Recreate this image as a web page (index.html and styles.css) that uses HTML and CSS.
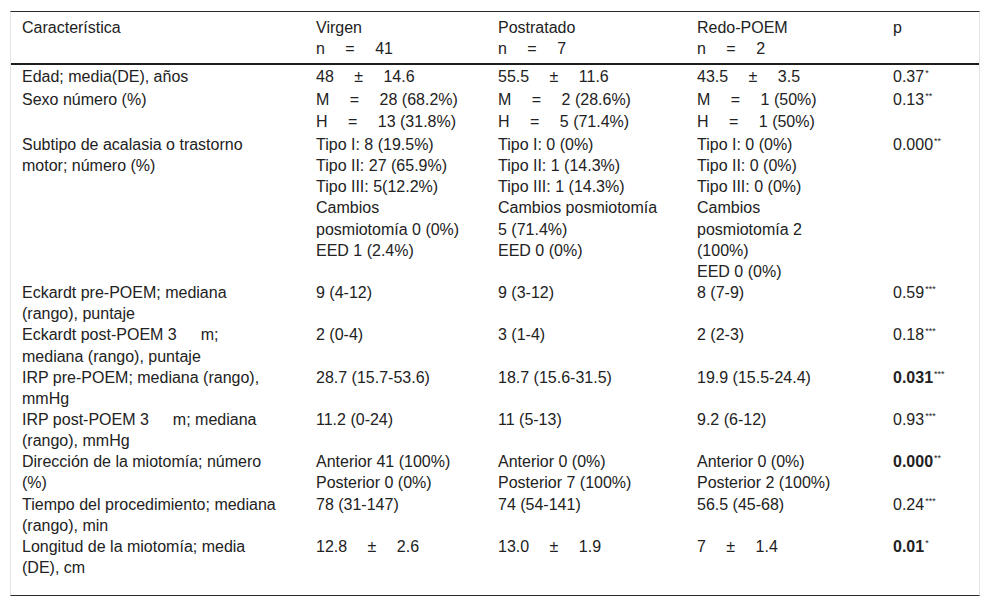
FILE: index.html
```html
<!DOCTYPE html>
<html lang="es">
<head>
<meta charset="utf-8">
<title>Características</title>
<link rel="stylesheet" href="styles.css">
</head>
<body>
<div class="table-wrap">
  <table class="data">
    <colgroup>
      <col class="w1"><col class="w2"><col class="w3"><col class="w4"><col class="w5">
    </colgroup>
    <thead>
      <tr>
        <th>Característica</th>
        <th>Virgen<br><span class="stat">n&nbsp;&emsp;=&nbsp;&emsp;41</span></th>
        <th>Postratado<br><span class="stat">n&nbsp;&emsp;=&nbsp;&emsp;7</span></th>
        <th>Redo-POEM<br><span class="stat">n&nbsp;&emsp;=&nbsp;&emsp;2</span></th>
        <th>p</th>
      </tr>
    </thead>
    <tbody>
      <tr>
        <td>Edad; media(DE), años</td>
        <td class="stat">48&nbsp;&emsp;±&nbsp;&emsp;14.6</td>
        <td class="stat">55.5&nbsp;&emsp;±&nbsp;&emsp;11.6</td>
        <td class="stat">43.5&nbsp;&emsp;±&nbsp;&emsp;3.5</td>
        <td>0.37<span class="sig">*</span></td>
      </tr>
      <tr>
        <td>Sexo número (%)</td>
        <td class="stat">M&nbsp;&emsp;=&nbsp;&emsp;28 (68.2%)<br>H&nbsp;&emsp;=&nbsp;&emsp;13 (31.8%)</td>
        <td class="stat">M&nbsp;&emsp;=&nbsp;&emsp;2 (28.6%)<br>H&nbsp;&emsp;=&nbsp;&emsp;5 (71.4%)</td>
        <td class="stat">M&nbsp;&emsp;=&nbsp;&emsp;1 (50%)<br>H&nbsp;&emsp;=&nbsp;&emsp;1 (50%)</td>
        <td>0.13<span class="sig">**</span></td>
      </tr>
      <tr>
        <td>Subtipo de acalasia o trastorno motor; número (%)</td>
        <td>Tipo I: 8 (19.5%)<br>Tipo II: 27 (65.9%)<br>Tipo III: 5(12.2%)<br>Cambios posmiotomía 0 (0%)<br>EED 1 (2.4%)</td>
        <td>Tipo I: 0 (0%)<br>Tipo II: 1 (14.3%)<br>Tipo III: 1 (14.3%)<br>Cambios posmiotomía 5 (71.4%)<br>EED 0 (0%)</td>
        <td>Tipo I: 0 (0%)<br>Tipo II: 0 (0%)<br>Tipo III: 0 (0%)<br>Cambios posmiotomía 2 (100%)<br>EED 0 (0%)</td>
        <td>0.000<span class="sig">**</span></td>
      </tr>
      <tr>
        <td>Eckardt pre-POEM; mediana (rango), puntaje</td>
        <td>9 (4-12)</td>
        <td>9 (3-12)</td>
        <td>8 (7-9)</td>
        <td>0.59<span class="sig">***</span></td>
      </tr>
      <tr>
        <td>Eckardt post-POEM 3&ensp;&emsp;m; mediana (rango), puntaje</td>
        <td>2 (0-4)</td>
        <td>3 (1-4)</td>
        <td>2 (2-3)</td>
        <td>0.18<span class="sig">***</span></td>
      </tr>
      <tr>
        <td>IRP pre-POEM; mediana (rango), mmHg</td>
        <td>28.7 (15.7-53.6)</td>
        <td>18.7 (15.6-31.5)</td>
        <td>19.9 (15.5-24.4)</td>
        <td><b>0.031</b><span class="sig">***</span></td>
      </tr>
      <tr>
        <td>IRP post-POEM 3&ensp;&emsp;m; mediana (rango), mmHg</td>
        <td>11.2 (0-24)</td>
        <td>11 (5-13)</td>
        <td>9.2 (6-12)</td>
        <td>0.93<span class="sig">***</span></td>
      </tr>
      <tr>
        <td>Dirección de la miotomía; número (%)</td>
        <td>Anterior 41 (100%)<br>Posterior 0 (0%)</td>
        <td>Anterior 0 (0%)<br>Posterior 7 (100%)</td>
        <td>Anterior 0 (0%)<br>Posterior 2 (100%)</td>
        <td><b>0.000</b><span class="sig">**</span></td>
      </tr>
      <tr>
        <td>Tiempo del procedimiento; mediana (rango), min</td>
        <td>78 (31-147)</td>
        <td>74 (54-141)</td>
        <td>56.5 (45-68)</td>
        <td>0.24<span class="sig">***</span></td>
      </tr>
      <tr>
        <td>Longitud de la miotomía; media (DE), cm</td>
        <td class="stat">12.8&nbsp;&emsp;±&nbsp;&emsp;2.6</td>
        <td class="stat">13.0&nbsp;&emsp;±&nbsp;&emsp;1.9</td>
        <td class="stat">7&nbsp;&emsp;±&nbsp;&emsp;1.4</td>
        <td><b>0.01</b><span class="sig">*</span></td>
      </tr>
    </tbody>
  </table>
</div>
</body>
</html>
```

FILE: styles.css
```css
html, body {
  margin: 0;
  padding: 0;
  background: #ffffff;
}

body {
  font-family: "Liberation Sans", Arial, sans-serif;
  font-size: 16px;
  line-height: 21.15px;
  color: #222222;
}

.table-wrap {
  width: 968px;
  margin: 11px 0 0 10px;
  border-top: 1px solid #2b2b2b;
  border-bottom: 1px solid #2b2b2b;
  border-left: 1px solid #e4e4e4;
  border-right: 1px solid #e4e4e4;
  padding-bottom: 17px;
}

.data {
  width: 968px;
  border-collapse: collapse;
  table-layout: fixed;
}

.w1 { width: 293px; }
.w2 { width: 182px; }
.w3 { width: 199px; }
.w4 { width: 196px; }
.w5 { width: 98px; }

.data th,
.data td {
  text-align: left;
  vertical-align: top;
  font-weight: normal;
  padding: 0 24px 0 12px;
}

.data th {
  padding-top: 5px;
  padding-bottom: 2px;
  border-bottom: 2px solid #1e1e1e;
}

.data tbody tr:first-child td {
  padding-top: 1px;
}

.data th:first-child,
.data td:first-child {
  padding-left: 11px;
  padding-right: 27px;
}

.data th:nth-child(2),
.data td:nth-child(2) {
  padding-right: 20px;
}

.data th:nth-child(4),
.data td:nth-child(4) {
  padding-right: 40px;
}

.data th:nth-child(5),
.data td:nth-child(5) {
  padding-right: 4px;
}

.data .stat {
  line-height: 22.7px;
  white-space: nowrap;
}

.data b {
  font-weight: bold;
}

.sig {
  font-size: 9px;
  line-height: 0;
  vertical-align: 6px;
  margin-left: 1px;
}
```
